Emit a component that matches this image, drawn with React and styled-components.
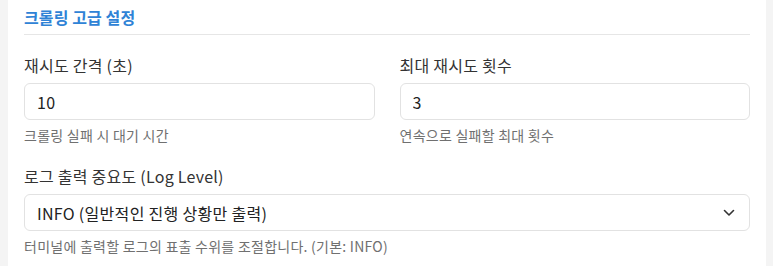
import React from "react";
import styled, { createGlobalStyle } from "styled-components";

const GlobalStyle = createGlobalStyle`
  html, body {
    margin: 0;
    padding: 0;
    background: #f4f4f4;
  }
  body {
    font-family: "Noto Sans CJK KR", "Noto Sans", sans-serif;
  }
`;

const Page = styled.div`
  padding: 0 7px 0 8px;
  min-height: 266px;
  box-sizing: border-box;
`;

const Panel = styled.section`
  background: #ffffff;
  padding: 6px 16px 12px;
  min-height: 266px;
  box-sizing: border-box;
`;

const Heading = styled.h3`
  margin: 0;
  padding-bottom: 6px;
  font-size: 16px;
  line-height: 22px;
  font-weight: 700;
  letter-spacing: 0.1px;
  color: #2f83d6;
  border-bottom: 1px solid #e6e6e6;
`;

const Grid = styled.div`
  display: grid;
  grid-template-columns: 1fr 1fr;
  column-gap: 25px;
  margin-top: 19px;
`;

const Field = styled.div`
  display: flex;
  flex-direction: column;
  margin-top: ${(p) => (p.$spaced ? "20px" : "0")};
`;

const Label = styled.label`
  font-size: 16px;
  line-height: 22px;
  letter-spacing: 0.25px;
  color: #333333;
  margin-bottom: 7px;
`;

const Input = styled.input`
  height: 37px;
  box-sizing: border-box;
  border: 1px solid #e2e2e2;
  border-radius: 6px;
  padding: 0 12px;
  font-family: inherit;
  font-size: 16px;
  letter-spacing: 0.3px;
  color: #222222;
  background: #ffffff;
  outline: none;
`;

const SelectWrap = styled.div`
  position: relative;
  display: flex;
`;

const Select = styled.select`
  flex: 1;
  height: 37px;
  box-sizing: border-box;
  border: 1px solid #e2e2e2;
  border-radius: 6px;
  padding: 0 12px;
  font-family: inherit;
  font-size: 16px;
  letter-spacing: 0.3px;
  color: #222222;
  background: #ffffff;
  appearance: none;
  outline: none;
`;

const Chevron = styled.svg`
  position: absolute;
  right: 15px;
  top: 50%;
  transform: translateY(-50%);
  pointer-events: none;
`;

const Help = styled.span`
  margin-top: 5px;
  font-size: 14px;
  line-height: 20px;
  letter-spacing: 0.25px;
  color: #707070;
`;

export default function App() {
  return (
    <>
      <GlobalStyle />
      <Page>
        <Panel>
          <Heading>크롤링 고급 설정</Heading>
          <Grid>
            <Field>
              <Label>재시도 간격 (초)</Label>
              <Input defaultValue="10" />
              <Help>크롤링 실패 시 대기 시간</Help>
            </Field>
            <Field>
              <Label>최대 재시도 횟수</Label>
              <Input defaultValue="3" />
              <Help>연속으로 실패할 최대 횟수</Help>
            </Field>
          </Grid>
          <Field $spaced>
            <Label>로그 출력 중요도 (Log Level)</Label>
            <SelectWrap>
              <Select defaultValue="INFO">
                <option value="INFO">INFO (일반적인 진행 상황만 출력)</option>
              </Select>
              <Chevron width="12" height="8" viewBox="0 0 12 8" fill="none">
                <path d="M1.5 1.5 L6 6 L10.5 1.5" stroke="#333" strokeWidth="1.6" strokeLinecap="round" strokeLinejoin="round" />
              </Chevron>
            </SelectWrap>
            <Help>터미널에 출력할 로그의 표출 수위를 조절합니다. (기본: INFO)</Help>
          </Field>
        </Panel>
      </Page>
    </>
  );
}
